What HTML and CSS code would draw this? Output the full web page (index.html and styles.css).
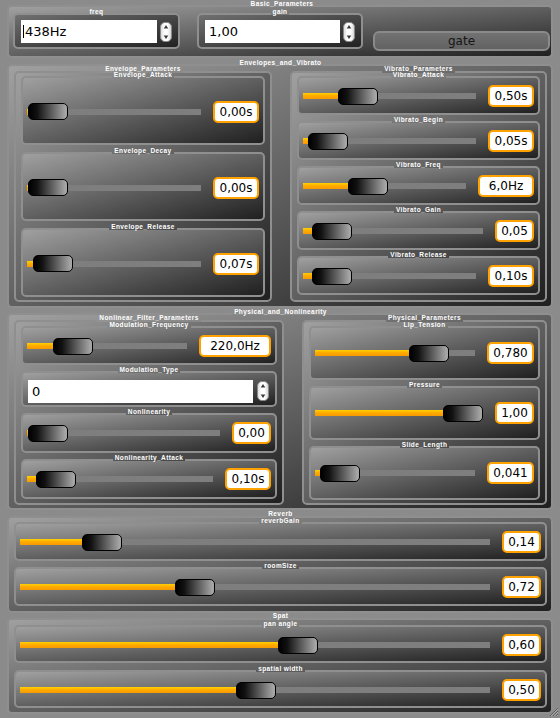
FILE: index.html
```html
<!DOCTYPE html>
<html>
<head>
<meta charset="utf-8">
<title>Faust UI</title>
<link rel="stylesheet" href="styles.css">
</head>
<body>
<svg class="defs" width="0" height="0" aria-hidden="true">
  <defs>
    <linearGradient id="spinfill" x1="0" y1="0" x2="1" y2="0">
      <stop offset="0" stop-color="#d8d8d8"/>
      <stop offset="0.35" stop-color="#ffffff"/>
      <stop offset="0.65" stop-color="#ffffff"/>
      <stop offset="1" stop-color="#d0d0d0"/>
    </linearGradient>
  </defs>
</svg>
<main class="root">

  <fieldset class="box basic">
    <legend>Basic_Parameters</legend>
    <div class="basic-row">
      <fieldset class="box nbox w-freq">
        <legend>freq</legend>
        <div class="erow">
          <div class="entry"><span class="caret"></span>438Hz</div>
          <svg class="spin" viewBox="0 0 12 20" width="12" height="20"><rect x="0.5" y="0.5" width="11" height="19" rx="4.5" fill="url(#spinfill)" stroke="#8a8a8a"/><path d="M6 3 L8.3 6.6 H3.7 Z" fill="#3a3a3a"/><path d="M3.7 13.4 H8.3 L6 17 Z" fill="#3a3a3a"/></svg>
        </div>
      </fieldset>
      <fieldset class="box nbox w-gain">
        <legend>gain</legend>
        <div class="erow">
          <div class="entry">1,00</div>
          <svg class="spin" viewBox="0 0 12 20" width="12" height="20"><rect x="0.5" y="0.5" width="11" height="19" rx="4.5" fill="url(#spinfill)" stroke="#8a8a8a"/><path d="M6 3 L8.3 6.6 H3.7 Z" fill="#3a3a3a"/><path d="M3.7 13.4 H8.3 L6 17 Z" fill="#3a3a3a"/></svg>
        </div>
      </fieldset>
      <button class="gate" type="button">gate</button>
    </div>
  </fieldset>

  <fieldset class="box section sec-env">
    <legend>Envelopes_and_Vibrato</legend>
    <div class="cols">
      <fieldset class="box col col-envp">
        <legend>Envelope_Parameters</legend>
        <div class="stack stack-env">
          <fieldset class="box sl pb3">
            <legend>Envelope_Attack</legend>
            <div class="srow r57"><div class="track" style="--t:0"><i class="fill"></i><i class="thumb"></i><i class="rest"></i></div><output class="val v46">0,00s</output></div>
          </fieldset>
          <fieldset class="box sl pb3">
            <legend>Envelope_Decay</legend>
            <div class="srow r57"><div class="track" style="--t:0"><i class="fill"></i><i class="thumb"></i><i class="rest"></i></div><output class="val v46">0,00s</output></div>
          </fieldset>
          <fieldset class="box sl pb3">
            <legend>Envelope_Release</legend>
            <div class="srow r57"><div class="track" style="--t:0.037"><i class="fill"></i><i class="thumb"></i><i class="rest"></i></div><output class="val v46">0,07s</output></div>
          </fieldset>
        </div>
      </fieldset>
      <fieldset class="box col col-vib">
        <legend>Vibrato_Parameters</legend>
        <div class="stack stack-vib">
          <fieldset class="box sl pb4">
            <legend>Vibrato_Attack</legend>
            <div class="srow r26"><div class="track" style="--t:0.256"><i class="fill"></i><i class="thumb"></i><i class="rest"></i></div><output class="val v46">0,50s</output></div>
          </fieldset>
          <fieldset class="box sl pb4">
            <legend>Vibrato_Begin</legend>
            <div class="srow r26"><div class="track" style="--t:0.028"><i class="fill"></i><i class="thumb"></i><i class="rest"></i></div><output class="val v46">0,05s</output></div>
          </fieldset>
          <fieldset class="box sl pb4">
            <legend>Vibrato_Freq</legend>
            <div class="srow r26"><div class="track" style="--t:0.36"><i class="fill"></i><i class="thumb"></i><i class="rest"></i></div><output class="val v56">6,0Hz</output></div>
          </fieldset>
          <fieldset class="box sl pb4">
            <legend>Vibrato_Gain</legend>
            <div class="srow r26"><div class="track" style="--t:0.055"><i class="fill"></i><i class="thumb"></i><i class="rest"></i></div><output class="val v39">0,05</output></div>
          </fieldset>
          <fieldset class="box sl pb4">
            <legend>Vibrato_Release</legend>
            <div class="srow r26"><div class="track" style="--t:0.058"><i class="fill"></i><i class="thumb"></i><i class="rest"></i></div><output class="val v46">0,10s</output></div>
          </fieldset>
        </div>
      </fieldset>
    </div>
  </fieldset>

  <fieldset class="box section sec-phys">
    <legend>Physical_and_Nonlinearity</legend>
    <div class="cols">
      <fieldset class="box col col-nl">
        <legend>Nonlinear_Filter_Parameters</legend>
        <div class="stack stack-nl">
          <fieldset class="box sl pb4">
            <legend>Modulation_Frequency</legend>
            <div class="srow r26"><div class="track" style="--t:0.21"><i class="fill"></i><i class="thumb"></i><i class="rest"></i></div><output class="val v72">220,0Hz</output></div>
          </fieldset>
          <fieldset class="box sl pb1">
            <legend>Modulation_Type</legend>
            <div class="erow erow-type">
              <div class="entry">0</div>
              <svg class="spin" viewBox="0 0 12 20" width="12" height="20"><rect x="0.5" y="0.5" width="11" height="19" rx="4.5" fill="url(#spinfill)" stroke="#8a8a8a"/><path d="M6 3 L8.3 6.6 H3.7 Z" fill="#3a3a3a"/><path d="M3.7 13.4 H8.3 L6 17 Z" fill="#3a3a3a"/></svg>
            </div>
          </fieldset>
          <fieldset class="box sl pb5">
            <legend>Nonlinearity</legend>
            <div class="srow r26"><div class="track" style="--t:0"><i class="fill"></i><i class="thumb"></i><i class="rest"></i></div><output class="val v39">0,00</output></div>
          </fieldset>
          <fieldset class="box sl pb5">
            <legend>Nonlinearity_Attack</legend>
            <div class="srow r26"><div class="track" style="--t:0.052"><i class="fill"></i><i class="thumb"></i><i class="rest"></i></div><output class="val v46">0,10s</output></div>
          </fieldset>
        </div>
      </fieldset>
      <fieldset class="box col col-ph">
        <legend>Physical_Parameters</legend>
        <div class="stack stack-ph">
          <fieldset class="box sl pb5">
            <legend>Lip_Tension</legend>
            <div class="srow r40"><div class="track" style="--t:0.78"><i class="fill"></i><i class="thumb"></i><i class="rest"></i></div><output class="val v47">0,780</output></div>
          </fieldset>
          <fieldset class="box sl pb5">
            <legend>Pressure</legend>
            <div class="srow r40"><div class="track" style="--t:1"><i class="fill"></i><i class="thumb"></i><i class="rest"></i></div><output class="val v39">1,00</output></div>
          </fieldset>
          <fieldset class="box sl pb5">
            <legend>Slide_Length</legend>
            <div class="srow r40"><div class="track" style="--t:0.036"><i class="fill"></i><i class="thumb"></i><i class="rest"></i></div><output class="val v47">0,041</output></div>
          </fieldset>
        </div>
      </fieldset>
    </div>
  </fieldset>

  <fieldset class="box section sec-rev">
    <legend>Reverb</legend>
    <div class="stack stack-rev">
      <fieldset class="box sl pb4">
        <legend>reverbGain</legend>
        <div class="srow r26"><div class="track" style="--t:0.142"><i class="fill"></i><i class="thumb"></i><i class="rest"></i></div><output class="val v39">0,14</output></div>
      </fieldset>
      <fieldset class="box sl pb4">
        <legend>roomSize</legend>
        <div class="srow r26"><div class="track" style="--t:0.358"><i class="fill"></i><i class="thumb"></i><i class="rest"></i></div><output class="val v39">0,72</output></div>
      </fieldset>
    </div>
  </fieldset>

  <fieldset class="box section sec-spat">
    <legend>Spat</legend>
    <div class="stack stack-spat">
      <fieldset class="box sl pb3">
        <legend>pan angle</legend>
        <div class="srow r26"><div class="track" style="--t:0.598"><i class="fill"></i><i class="thumb"></i><i class="rest"></i></div><output class="val v39">0,60</output></div>
      </fieldset>
      <fieldset class="box sl pb3">
        <legend>spatial width</legend>
        <div class="srow r26"><div class="track" style="--t:0.502"><i class="fill"></i><i class="thumb"></i><i class="rest"></i></div><output class="val v39">0,50</output></div>
      </fieldset>
    </div>
  </fieldset>

</main>
<svg class="grip" viewBox="0 0 12 12" width="12" height="12" aria-hidden="true">
  <path d="M11 3 L3 11 M11 6 L6 11 M11 9 L9 11" stroke="#5a5a5a" stroke-width="1"/>
  <path d="M11 4 L4 11 M11 7 L7 11 M11 10 L10 11" stroke="#b0b0b0" stroke-width="1"/>
</svg>
</body>
</html>
```

FILE: styles.css
```css
* { box-sizing: border-box; }

html, body {
  margin: 0;
  padding: 0;
}

body {
  width: 560px;
  height: 718px;
  overflow: hidden;
  background: #8b8b8b;
  font-family: "DejaVu Sans", "Liberation Sans", sans-serif;
  position: relative;
}

.defs { position: absolute; width: 0; height: 0; }

.root {
  display: flex;
  flex-direction: column;
  padding: 0 7px;
}

/* generic group box (Qt QGroupBox look) */
.box {
  margin: 0;
  min-width: 0;
  padding: 0;
  border: 2px solid #8f8f8f;
  border-radius: 5px;
  background: linear-gradient(to bottom right, #a0a0a0, #202020);
}

.box > legend {
  display: block;
  margin: 0 auto;
  padding: 1px 2px 5px;
  height: 12px;
  font-family: "Liberation Sans", Arial, sans-serif;
  font-weight: bold;
  font-size: 6.5px;
  letter-spacing: 0.4px;
  line-height: 6px;
  color: #ffffff;
  white-space: nowrap;
}

.col > legend,
.sec-rev > legend,
.sec-spat > legend {
  padding: 0 2px 6px;
}

/* ---------- Basic parameters ---------- */
.basic {
  padding: 0 0 5px 4px;
}

.basic-row {
  display: flex;
  align-items: flex-start;
  margin-top: -4px;
}

.nbox {
  padding: 0 6px 4px;
  background: linear-gradient(to bottom right, #707070, #222222);
}

.w-freq { width: 167px; margin-right: 17px; }
.w-gain { width: 166px; margin-right: 10px; }

.erow {
  display: flex;
  align-items: center;
  height: 23px;
}

.entry {
  flex: 1;
  height: 23px;
  background: #ffffff;
  color: #000;
  font-size: 13px;
  line-height: 23px;
  padding-left: 4px;
  white-space: nowrap;
  display: flex;
  align-items: center;
}

.caret {
  display: inline-block;
  width: 1px;
  height: 13px;
  background: #000;
  margin-left: -2px;
  margin-right: 1px;
}

.spin {
  flex: none;
  display: block;
  margin-left: 3px;
}

.gate {
  width: 177px;
  height: 20px;
  margin-top: 23px;
  padding: 0;
  border: 2px solid #8a8a8a;
  border-radius: 6px;
  background: linear-gradient(#727272, #626262);
  color: #151515;
  font-family: "DejaVu Sans", sans-serif;
  font-size: 12px;
  line-height: 16px;
}

/* ---------- sections ---------- */
.section {
  padding: 0 4px 4px 5px;
}

.sec-env { margin-top: 1px; }
.sec-phys { padding-bottom: 3px; }
.sec-rev { margin-top: 1px; padding-bottom: 5px; }
.sec-spat { padding-bottom: 4px; }

.cols {
  display: flex;
  align-items: stretch;
  margin-top: -5px;
  gap: 18px;
}

.col {
  padding: 0 5px 3px;
}

.col-envp { width: 258px; }
.col-vib { width: 257px; }
.col-nl { width: 270px; padding-bottom: 4px; }
.col-ph { width: 245px; }

.stack {
  display: flex;
  flex-direction: column;
}

.stack-env { margin-top: -7px; gap: 2px; }
.stack-vib { margin-top: -7px; gap: 1px; }
.stack-nl { margin-top: -6px; gap: 1px; }
.stack-ph { margin-top: -6px; gap: 1px; }
.stack-rev { margin-top: -6px; gap: 1px; }
.stack-spat { margin-top: -5px; gap: 2px; }

/* ---------- slider boxes ---------- */
.sl { padding: 0 4px 4px; }
.pb1 { padding-bottom: 1px; }
.pb3 { padding-bottom: 3px; }
.pb4 { padding-bottom: 4px; }
.pb5 { padding-bottom: 5px; }

.srow {
  display: flex;
  align-items: center;
}

.r26 { height: 26px; }
.r40 { height: 40px; }
.r57 { height: 57px; }

.track {
  flex: 1;
  min-width: 0;
  display: flex;
  align-items: center;
  height: 17px;
  margin-right: 12px;
}

.track > i { display: block; flex: none; }

.fill {
  width: calc(1px + var(--t) * (100% - 41px));
  height: 6px;
  background: linear-gradient(#ffd200, #ffab00 45%, #f59a00);
}

.thumb {
  width: 40px;
  height: 17px;
  border: 1px solid #000;
  border-radius: 5px;
  background: linear-gradient(to right, #000 0%, #121212 22%, #a6a6a6 96%);
}

.track > .rest {
  flex: 1;
  height: 6px;
  background: #7e7e7e;
}

.val {
  flex: none;
  display: flex;
  align-items: center;
  justify-content: center;
  height: 22px;
  border: 2px solid #ffa200;
  border-radius: 5px;
  background: #ffffff;
  color: #000;
  font-family: "DejaVu Sans", sans-serif;
  font-size: 12px;
  line-height: 18px;
  white-space: nowrap;
}

.v39 { width: 39px; }
.v46 { width: 46px; }
.v47 { width: 47px; }
.v56 { width: 56px; }
.v72 { width: 72px; }

.erow-type {
  height: 26px;
  padding: 0 2px 0 1px;
}

.erow-type .entry {
  font-size: 13px;
  padding-left: 4px;
}

.erow-type .spin { margin-left: 4px; }

.grip {
  position: absolute;
  right: 1px;
  bottom: 1px;
}
```
